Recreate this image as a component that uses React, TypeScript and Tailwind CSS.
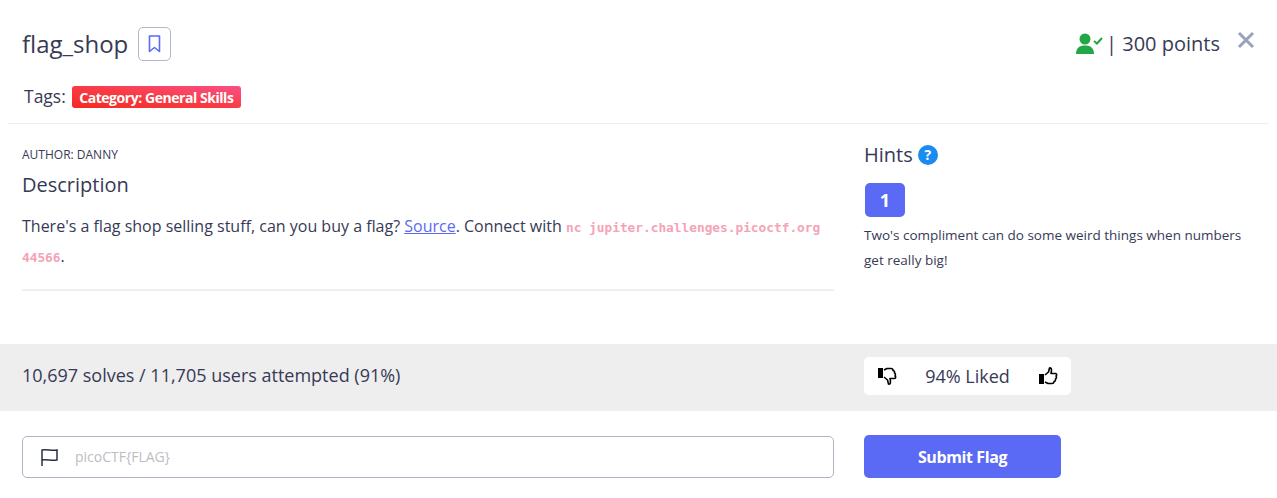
import React from "react";

const Thumb = ({ down }: { down?: boolean }) => (
  <svg width="20" height="20" viewBox="0 0 20 20" className={down ? "-scale-y-100" : ""}>
    <rect x="1" y="8" width="5" height="10" fill="#000" />
    <path d="M7 9 L10.5 6 L11.5 2 C13.5 1.5 14 3.5 13 7.5 L17.5 7.5 C19 7.5 19 9.5 18 10 C18.8 11 18.5 12.5 17.5 13 C17.8 14.5 17 15.5 16 15.5 C16 17 15 17.5 14 17.5 L10 17.5 L7 16" fill="none" stroke="#000" strokeWidth="1.6" strokeLinejoin="round" />
  </svg>
);

export default function App() {
  return (
    <div className="w-[1277px] h-[498px] bg-white overflow-hidden text-[#373a56] font-['Open_Sans','Noto_Sans',sans-serif]">
      <div className="h-[124px] mx-2 border-b border-[#eeeeee] flex flex-col">
        <div className="flex items-center justify-between pl-[14px] pr-[14px] pt-[27px]">
          <div className="flex items-center gap-[10px]">
            <span className="text-[24px] leading-[32px]">flag_shop</span>
            <span className="w-[33px] h-[34px] border border-[#b3b8ca] rounded-[5px] flex items-center justify-center">
              <svg width="13" height="18" viewBox="0 0 13 18" fill="none" stroke="#5a6af5" strokeWidth="1.6" strokeLinejoin="round">
                <path d="M1.5 1 H11.5 V16.5 L6.5 12.5 L1.5 16.5 Z" />
              </svg>
            </span>
          </div>
          <div className="flex items-center text-[20px] leading-[28px]">
            <svg width="28" height="24" viewBox="0 0 28 24" className="mr-[3px]">
              <circle cx="10" cy="7" r="5.5" fill="#22a745" />
              <path d="M1 22 C1 16 4.5 13.5 10 13.5 C15.5 13.5 19 16 19 22 Z" fill="#22a745" />
              <path d="M19 9 L22 11.5 L27 6" fill="none" stroke="#22a745" strokeWidth="2" />
            </svg>
            <span>| 300 points</span>
            <svg width="18" height="18" viewBox="0 0 18 18" className="ml-[17px] -mt-[8px]" stroke="#9aa1bb" strokeWidth="3">
              <path d="M2 2 L16 16 M16 2 L2 16" />
            </svg>
          </div>
        </div>
        <div className="flex items-center pl-[16px] mt-[22px]">
          <span className="text-[17.5px] leading-[24px]">Tags:</span>
          <span className="ml-[6px] mt-[3px] h-[22px] w-[169px] rounded-[3px] bg-gradient-to-tr from-[#f5291f] via-[#f83c45] to-[#fb4f86] text-white text-[14px] font-bold tracking-[-0.45px] flex items-center justify-center">Category: General Skills</span>
        </div>
      </div>
      <div className="flex h-[220px]">
        <div className="w-[834px] pl-[22px]">
          <div className="pt-[22px] text-[12px] leading-[18px]">AUTHOR: DANNY</div>
          <div className="mt-[7px] text-[20px] leading-[28px]">Description</div>
          <p className="mt-[13px] text-[16px] leading-[29px] pb-[17px] border-b-2 border-[#efefef]">
            There's a flag shop selling stuff, can you buy a flag? <a className="text-[#5a6af5] underline">Source</a>. Connect with <code className="font-['DejaVu_Sans_Mono',monospace] font-bold text-[12.8px] text-[#f5a3b7]">nc jupiter.challenges.picoctf.org 44566</code>.
          </p>
        </div>
        <div className="ml-[30px] w-[390px]">
          <div className="pt-[17px] flex items-center gap-[5px] text-[20px] leading-[28px]">
            <span>Hints</span>
            <span className="w-[20px] h-[20px] rounded-full bg-[#1a8cf0] text-white text-[14px] font-bold flex items-center justify-center">?</span>
          </div>
          <div className="mt-[14px] ml-[1px] w-[40px] h-[34px] rounded-[5px] bg-[#5a6af5] text-white text-[18px] font-bold flex items-center justify-center">1</div>
          <p className="mt-[6px] text-[13.5px] leading-[25px]">Two's compliment can do some weird things when numbers get really big!</p>
        </div>
      </div>
      <div className="h-[67px] bg-[#eeeeee] flex items-center">
        <div className="w-[864px] pl-[22px] text-[18px] -mt-[5px]">10,697 solves / 11,705 users attempted (91%)</div>
        <div className="w-[207px] h-[38px] -mt-[3px] bg-white rounded-[5px] flex items-center justify-between pl-[13px] pr-[13px] text-[18px]">
          <Thumb down />
          <span>94% Liked</span>
          <Thumb />
        </div>
      </div>
      <div className="flex items-center pt-[24px]">
        <div className="ml-[22px] w-[812px] h-[42px] border border-[#b0b3c2] rounded-[5px] flex items-center pl-[17px]">
          <svg width="19" height="20" viewBox="0 0 19 20" fill="none" stroke="#2a2f48" strokeWidth="1.5">
            <path d="M2 19 V3 C6 2 12 4 17 3 V13 C12 14 6 12 2 13" />
          </svg>
          <span className="ml-[16px] text-[14px] text-[#bdbdc4]">picoCTF{"{FLAG}"}</span>
        </div>
        <div className="ml-[30px] w-[197px] h-[43px] rounded-[5px] bg-[#5a6af5] text-white text-[16px] font-bold tracking-[-0.4px] flex items-center justify-center">Submit Flag</div>
      </div>
    </div>
  );
}
